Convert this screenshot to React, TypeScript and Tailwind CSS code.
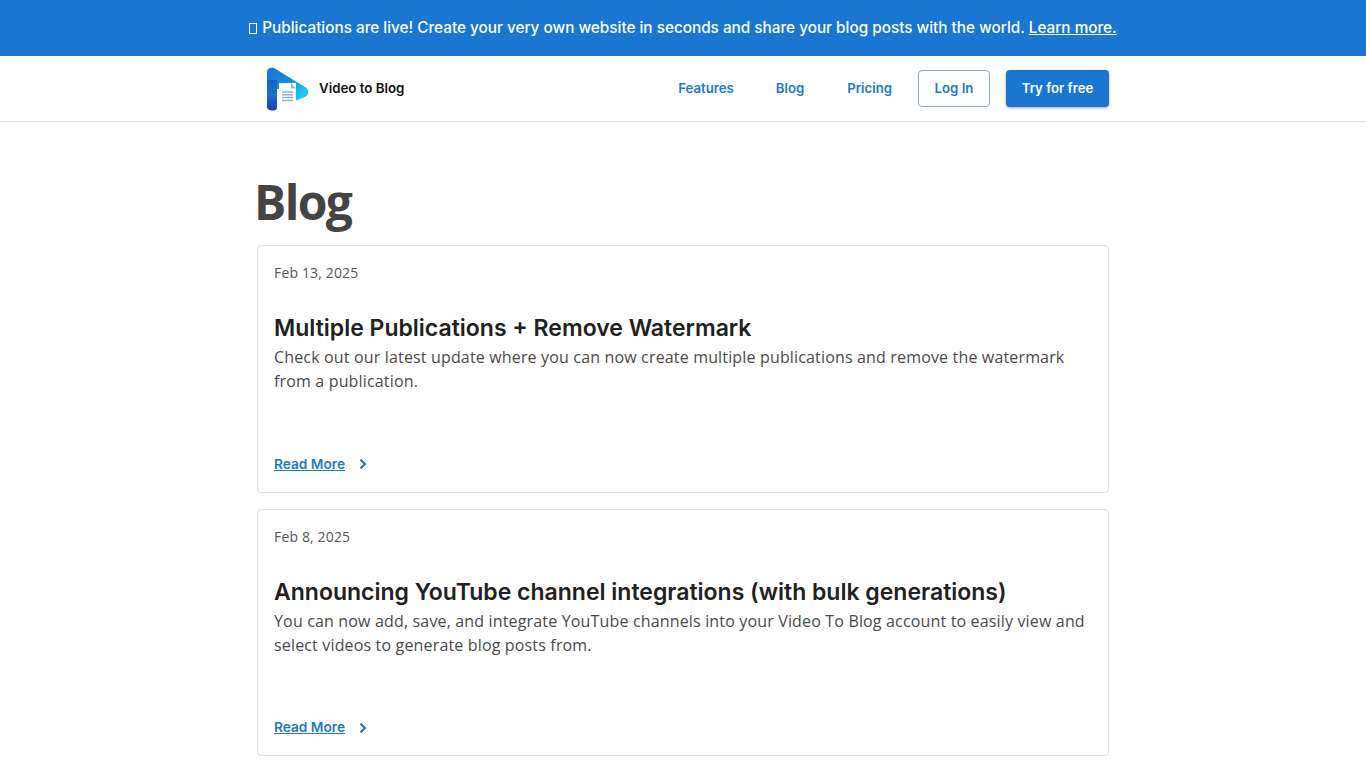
import React from 'react';

const posts = [
  {
    date: 'Feb 13, 2025',
    title: 'Multiple Publications + Remove Watermark',
    text: 'Check out our latest update where you can now create multiple publications and remove the watermark from a publication.',
  },
  {
    date: 'Feb 8, 2025',
    title: 'Announcing YouTube channel integrations (with bulk generations)',
    text: 'You can now add, save, and integrate YouTube channels into your Video To Blog account to easily view and select videos to generate blog posts from.',
  },
];

const Logo = () => (
  <svg width="44" height="44" viewBox="0 0 44 44" className="shrink-0">
    <defs>
      <linearGradient id="lgStem" x1="0" y1="0" x2="0" y2="1">
        <stop offset="0" stopColor="#1565c0" />
        <stop offset="0.500" stopColor="#1a6fd0" />
        <stop offset="1" stopColor="#1c3db4" />
      </linearGradient>
      <linearGradient id="lgPlay" x1="0" y1="0" x2="1" y2="0.600">
        <stop offset="0" stopColor="#1976d2" />
        <stop offset="0.600" stopColor="#1a8ae0" />
        <stop offset="1" stopColor="#20c6f5" />
      </linearGradient>
    </defs>
    <path d="M0 5C0 1 4 0 7 1L38 20C42.500 22.500 42.500 27.500 38 30L29 33.500V16H12V22H10V14H0Z" fill="url(#lgPlay)" />
    <path d="M0 13H10V40C10 43 8 43.500 5 43.500C2 43.500 0 42 0 40Z" fill="url(#lgStem)" />
    <path d="M12 16.500H24L29 21.500V36.500H12Z" fill="#ffffff" />
    <path d="M24 16.500V21.500H29Z" fill="#90b8dc" />
    <path d="M15 25H26M15 27.800H26M15 30.600H26M15 33.400H26" stroke="#8fb4d6" strokeWidth="1.500" />
  </svg>
);

export default function App() {
  return (
    <div className="min-h-screen bg-white font-['Inter',sans-serif]">
      <div className="flex h-14 items-center justify-center bg-[#1976d2] text-[15.300px] font-medium text-white">
        <span className="mr-[5px] inline-block h-[11px] w-[8px] border border-white" />
        <span>
          Publications are live! Create your very own website in seconds and share your blog posts with the world.{' '}
          <a className="underline">Learn more.</a>
        </span>
      </div>

      <header className="border-b border-[#e0e0e0]">
        <div className="mx-auto flex h-[65px] w-[852px] items-center">
          <div className="ml-[10px] flex items-center gap-[8px]">
            <Logo />
            <span className="text-[13.300px] font-semibold text-[#111111]">Video to Blog</span>
          </div>
          <nav className="ml-auto flex items-center text-[13.200px] font-semibold text-[#2279c9]">
            <a className="mr-[42px]">Features</a>
            <a className="mr-[43px]">Blog</a>
            <a className="mr-[26px]">Pricing</a>
            <a className="mr-[16px] flex h-[37px] w-[72px] items-center justify-center rounded border border-[#90a9c0]">Log In</a>
            <a className="flex h-[37px] w-[103px] items-center justify-center rounded bg-[#1976d2] text-white shadow-[0_1px_3px_rgba(0,0,0,0.35)]">Try for free</a>
          </nav>
        </div>
      </header>

      <main className="mx-auto w-[852px] pt-[48px]">
        <h1 className="ml-[-3px] mb-[11px] font-['Open_Sans',sans-serif] text-[48px] leading-[64px] font-bold tracking-[-1.600px] text-[#444444]">Blog</h1>
        <div className="flex flex-col gap-4">
          {posts.map(post => (
            <article key={post.title} className="flex h-[247.500px] flex-col rounded border border-[#e0e0e0] px-4 pt-4 pb-[17px]">
              <div className="font-['Open_Sans',sans-serif] text-[14px] leading-[22px] tracking-[0.15px] text-[#555555]">{post.date}</div>
              <h2 className="mt-[28px] text-[23px] leading-[32px] font-semibold text-[#212121]">{post.title}</h2>
              <p className="mt-[1px] font-['Open_Sans',sans-serif] text-[16px] leading-[24px] tracking-[0.16px] text-[#4a4a4a]">{post.text}</p>
              <div className="mt-auto flex items-center text-[13.700px] font-semibold text-[#1f7ac4]">
                <a className="underline">Read More</a>
                <svg width="10" height="12" viewBox="0 0 10 12" fill="none" className="ml-[13px]">
                  <path d="M2.500 1.500L7 6L2.500 10.500" stroke="#2a6f9e" strokeWidth="2" />
                </svg>
              </div>
            </article>
          ))}
        </div>
      </main>
    </div>
  );
}
